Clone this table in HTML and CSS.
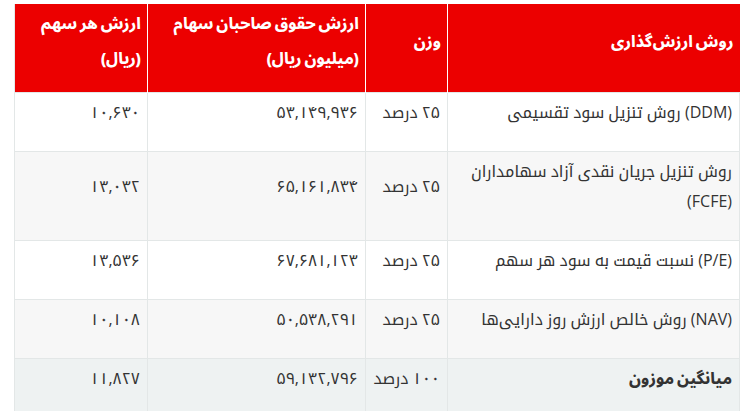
FILE: index.html
```html
<!DOCTYPE html>
<html lang="fa" dir="rtl">
<head>
<meta charset="utf-8">
<title>روش ارزش‌گذاری</title>
<link rel="stylesheet" href="styles.css">
</head>
<body>
<div class="wrap">
<table class="valuation">
  <colgroup>
    <col class="c-method">
    <col class="c-weight">
    <col class="c-equity">
    <col class="c-share">
  </colgroup>
  <thead>
    <tr>
      <th>روش ارزش‌گذاری</th>
      <th>وزن</th>
      <th>ارزش حقوق صاحبان سهام<br>(میلیون ریال)</th>
      <th>ارزش هر سهم<br>(ریال)</th>
    </tr>
  </thead>
  <tbody>
    <tr>
      <td>(DDM) روش تنزیل سود تقسیمی</td>
      <td>۲۵ درصد</td>
      <td>۵۳,۱۴۹,۹۳۶</td>
      <td>۱۰,۶۳۰</td>
    </tr>
    <tr class="alt">
      <td>روش تنزیل جریان نقدی آزاد سهامداران<br>(FCFE)</td>
      <td>۲۵ درصد</td>
      <td>۶۵,۱۶۱,۸۳۴</td>
      <td>۱۳,۰۳۲</td>
    </tr>
    <tr>
      <td>(P/E) نسبت قیمت به سود هر سهم</td>
      <td>۲۵ درصد</td>
      <td>۶۷,۶۸۱,۱۲۳</td>
      <td>۱۳,۵۳۶</td>
    </tr>
    <tr class="alt">
      <td>(NAV) روش خالص ارزش روز دارایی‌ها</td>
      <td>۲۵ درصد</td>
      <td>۵۰,۵۳۸,۲۹۱</td>
      <td>۱۰,۱۰۸</td>
    </tr>
    <tr class="total">
      <td class="strong">میانگین موزون</td>
      <td>۱۰۰ درصد</td>
      <td>۵۹,۱۳۲,۷۹۶</td>
      <td>۱۱,۸۲۷</td>
    </tr>
  </tbody>
</table>
</div>
</body>
</html>
```
FILE: styles.css
```css
html, body {
  margin: 0;
  padding: 0;
  background: #ffffff;
}
body {
  font-family: "Open Sans", "Noto Kufi Arabic", "DejaVu Sans", sans-serif;
  font-size: 16px;
  color: #333333;
}
.wrap {
  padding: 4px 14px 0 15px;
}
.valuation {
  width: 725px;
  table-layout: fixed;
  border-collapse: collapse;
  direction: rtl;
}
.c-method { width: 292px; }
.c-weight { width: 82px; }
.c-equity { width: 218px; }
.c-share { width: 133px; }

.valuation th {
  background: #ec0000;
  color: #ffffff;
  font-family: "Open Sans", "Noto Sans Arabic", "Noto Kufi Arabic", sans-serif;
  font-size: 16px;
  font-weight: 800;
  font-stretch: condensed;
  text-align: right;
  vertical-align: middle;
  line-height: 35px;
  padding: 2px 6px 16px 6px;
  border-left: 1px solid #ffffff;
  height: 70px;
  box-sizing: content-box;
}
.valuation th:last-child {
  border-left: 1px solid #e5e9e9;
}
.valuation td {
  text-align: right;
  vertical-align: middle;
  line-height: 30px;
  padding: 4px 7px 24px 7px;
  border: 1px solid #e3e7e7;
}
.valuation tr.alt td {
  background: #f7f7f7;
}
.valuation tr.total td {
  background: #eef2f2;
}
.valuation td.strong {
  font-family: "Open Sans", "Noto Sans Arabic", "Noto Kufi Arabic", sans-serif;
  font-size: 16px;
  font-weight: 800;
  font-stretch: condensed;
}
```
